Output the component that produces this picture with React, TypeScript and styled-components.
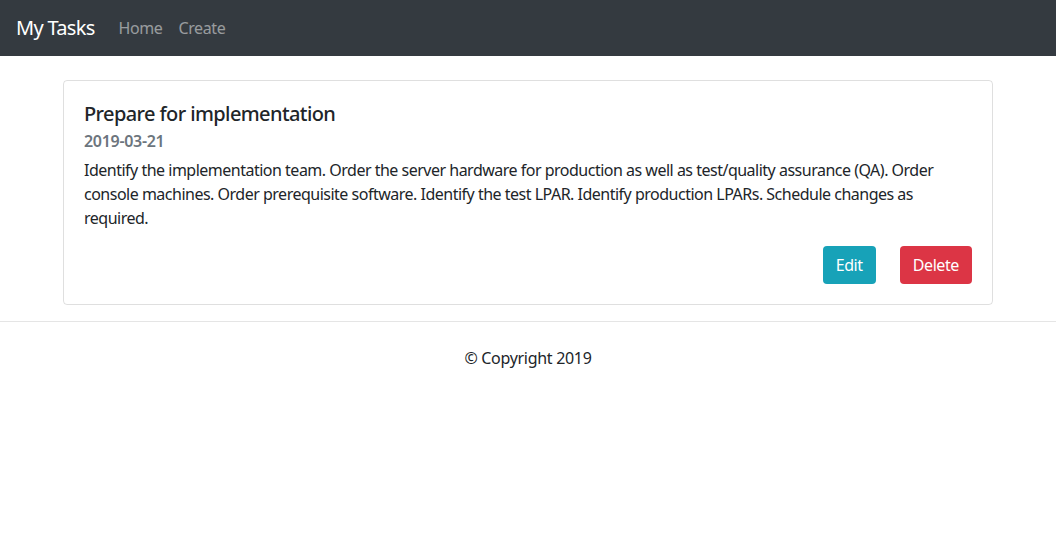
import React from "react";
import styled, { createGlobalStyle } from "styled-components";

const GlobalStyle = createGlobalStyle`
	* { box-sizing: border-box; }
	body {
		margin: 0;
		font-family: "Noto Sans", "Open Sans", sans-serif;
		font-size: 16px;
		line-height: 1.5;
		color: #212529;
		background: #fff;
	}
`;

const Navbar = styled.nav`
	height: 56px;
	background: #343a40;
	display: flex;
	align-items: center;
	padding: 0 16px;
`;

const Brand = styled.a`
	color: #fff;
	font-size: 20px;
	margin-right: 16px;
	text-decoration: none;
	letter-spacing: -0.7px;
`;

const NavLink = styled.a`
	color: rgba(255, 255, 255, 0.5);
	padding: 0 8px;
	text-decoration: none;
	letter-spacing: -0.4px;
`;

const Container = styled.div`
	max-width: 960px;
	margin: 0 auto;
	padding: 24px 15px 0;
`;

const Card = styled.div`
	border: 1px solid rgba(0, 0, 0, 0.125);
	border-radius: 4px;
	padding: 21px 20px 20px;
`;

const Title = styled.h5`
	margin: 0 0 6px;
	font-size: 20px;
	font-weight: 500;
	line-height: 1.2;
	letter-spacing: -0.6px;
`;

const Subtitle = styled.h6`
	margin: 0 0 7px;
	font-size: 16px;
	font-weight: 600;
	color: #6c757d;
	line-height: 1.2;
	letter-spacing: -0.3px;
`;

const Text = styled.p`
	margin: 0 0 16px;
	letter-spacing: -0.5px;
`;

const Actions = styled.div`
	display: flex;
	justify-content: flex-end;
	gap: 24px;
`;

const Button = styled.button<{ $variant: "info" | "danger" }>`
	font-family: inherit;
	font-size: 16px;
	line-height: 1.5;
	padding: 6px 12px;
	border: 1px solid transparent;
	border-radius: 4px;
	color: #fff;
	background: ${(p) => (p.$variant === "info" ? "#17a2b8" : "#dc3545")};
	letter-spacing: -0.4px;
`;

const Footer = styled.footer`
	margin-top: 16px;
	border-top: 1px solid rgba(0, 0, 0, 0.1);
	padding-top: 24px;
	text-align: center;
	letter-spacing: -0.3px;
`;

export default function App() {
	return (
		<>
			<GlobalStyle />
			<Navbar>
				<Brand href="#">My Tasks</Brand>
				<NavLink href="#">Home</NavLink>
				<NavLink href="#">Create</NavLink>
			</Navbar>
			<Container>
				<Card>
					<Title>Prepare for implementation</Title>
					<Subtitle>2019-03-21</Subtitle>
					<Text>
						Identify the implementation team. Order the server hardware for production as well as
						test/quality assurance (QA). Order console machines. Order prerequisite software.
						Identify the test LPAR. Identify production LPARs. Schedule changes as required.
					</Text>
					<Actions>
						<Button $variant="info">Edit</Button>
						<Button $variant="danger">Delete</Button>
					</Actions>
				</Card>
			</Container>
			<Footer>© Copyright 2019</Footer>
		</>
	);
}
